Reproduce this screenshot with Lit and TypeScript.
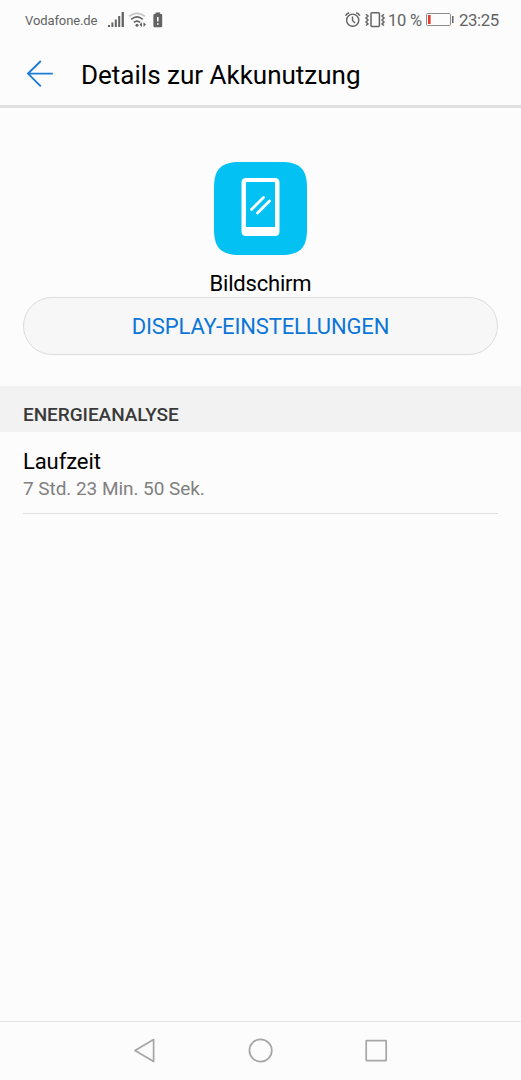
import { LitElement, html, css } from "lit";
import { customElement } from "lit/decorators.js";

@customElement("status-bar")
class StatusBar extends LitElement {
  static styles = css`
    :host { display: flex; justify-content: space-between; height: 40px; padding: 0 21px 0 25px; box-sizing: border-box; color: #636363; }
    .group { display: flex; align-items: center; height: 40px; white-space: nowrap; }
    .carrier { width: 82px; font-size: 13px; letter-spacing: -0.1px; }
    .percent { width: 37px; margin-left: 2px; font-size: 16.5px; letter-spacing: -0.2px; }
    .clock { width: 41px; margin-left: 4px; font-size: 16.8px; letter-spacing: -0.4px; }
    svg { display: block; flex: none; }
  `;
  render() {
    return html`
      <div class="group">
        <span class="carrier">Vodafone.de</span>
        <svg width="20" height="40" viewBox="107 0 20 40" fill="#636363">
          <rect x="108" y="25" width="2" height="2"/><rect x="111.4" y="22.5" width="2" height="4.5"/>
          <rect x="114.8" y="19.5" width="2" height="7.5"/><rect x="118.2" y="16" width="2" height="11"/>
          <rect x="121.6" y="12" width="2.3" height="15"/>
        </svg>
        <svg width="22" height="40" viewBox="127 0 22 40" fill="none" stroke="#636363" stroke-width="1.7">
          <path stroke="#c6c6c6" d="M129 16.4Q137 10.3 145 16.4"/>
          <path d="M131.2 19.3Q137 14.5 142.8 19.3M133.8 22.4Q137 19.8 140.2 22.4"/>
          <circle cx="137" cy="25.2" r="1.5" fill="#636363" stroke="none"/>
          <path fill="#636363" stroke="none" d="M142 22.2V27L139.5 24.6ZM143.5 22.2V27L146 24.6Z"/>
        </svg>
        <svg width="15" height="40" viewBox="149 0 15 40">
          <path fill="#636363" d="M155.5 12.5H160.2V14H161.2Q162.2 14 162.2 15V26Q162.2 27.2 161 27.2H154.6Q153.4 27.2 153.4 26V15Q153.4 14 154.4 14H155.5Z"/>
          <path stroke="#fcfcfc" stroke-width="1.6" d="M157.8 17V21.6M157.8 23.2V24.8"/>
        </svg>
      </div>
      <div class="group">
        <svg width="18" height="40" viewBox="344 0 18 40" fill="none" stroke="#636363" stroke-width="1.4">
          <circle cx="352.7" cy="20.2" r="6.1"/><path d="M352.5 16.5V20.5L355 22.9M345.5 15.8Q346.6 13.3 349.2 12.7M356.2 12.7Q358.8 13.3 359.9 15.8"/>
        </svg>
        <svg width="24" height="40" viewBox="362 0 24 40" fill="none" stroke="#636363" stroke-width="1.5">
          <rect x="371" y="12.8" width="8.4" height="13.6" rx="1"/>
          <path d="M366 14.3L368 16L366 18L368 20L366 22L368 24L366 25.5M384 14.3L382 16L384 18L382 20L384 22L382 24L384 25.5"/>
        </svg>
        <span class="percent">10 %</span>
        <svg width="30" height="40" viewBox="425 0 30 40">
          <rect x="426.5" y="13.5" width="24" height="12" rx="1.3" fill="none" stroke="#8c8c8c" stroke-width="1"/>
          <rect x="428" y="15" width="2.6" height="9" fill="#e33b2e"/><path stroke="#636363" stroke-width="1.5" d="M452.8 16V23"/>
        </svg>
        <span class="clock">23:25</span>
      </div>`;
  }
}

@customElement("nav-bar")
class NavBar extends LitElement {
  static styles = css`
    :host { display: flex; justify-content: space-between; height: 59px; box-sizing: border-box; padding: 14px 130px 0; border-top: 1px solid #e4e4e4; }
    svg { display: block; fill: none; stroke: #a6a6a6; stroke-width: 1.7; stroke-linejoin: round; }
  `;
  render() {
    return html`
      <svg width="29" height="30" viewBox="130 1036 29 30"><path d="M153.6 1039.6V1061.6L135 1050.6Z"/></svg>
      <svg width="30" height="30" viewBox="245.5 1036 30 30"><circle cx="260.1" cy="1050.5" r="11.2"/></svg>
      <svg width="29" height="30" viewBox="362 1036 29 30"><rect x="366.2" y="1040.6" width="20" height="20" rx="0.5"/></svg>`;
  }
}

@customElement("app-root")
class AppRoot extends LitElement {
  static styles = css`
    :host { display: flex; flex-direction: column; height: 1080px; background: #fcfcfc; font-family: Roboto, sans-serif; color: #000; }
    .header { display: flex; align-items: center; height: 68px; box-sizing: border-box; border-bottom: 3px solid #e0e0e0; padding-left: 25px; }
    .back { display: block; margin-right: 26px; }
    h1 { margin: 0; padding-top: 5px; font-size: 26px; font-weight: 400; line-height: 32px; white-space: nowrap; }
    .app { display: flex; flex-direction: column; align-items: center; padding: 54px 23px 31px; }
    .name { height: 42px; box-sizing: border-box; padding-top: 14px; font-size: 22px; letter-spacing: -0.2px; line-height: 30px; }
    .settings { width: 100%; height: 58px; box-sizing: border-box; border: 1px solid #dcdcdc; border-radius: 29px; background: #f7f7f7; color: #0c76d8; font: 400 22px Roboto, sans-serif; letter-spacing: -0.15px; padding: 1px 0 0; }
    h2 { margin: 0; height: 46px; box-sizing: border-box; padding: 15px 23px 0; background: #f2f2f2; color: #3a3a3a; font-size: 19px; letter-spacing: -0.05px; line-height: 27px; font-weight: 500; }
    .row { margin: 0 23px; height: 82px; box-sizing: border-box; border-bottom: 1px solid #dfdfdf; padding-top: 16px; }
    .label { font-size: 22px; line-height: 27px; letter-spacing: -0.1px; }
    .value { font-size: 19px; line-height: 28px; letter-spacing: -0.05px; color: #808080; }
    .space { flex: 1; }
  `;
  render() {
    return html`
      <status-bar></status-bar>
      <header class="header">
        <svg class="back" width="30" height="30" viewBox="25 58.500 30 30" fill="none" stroke="#1c7cd6" stroke-width="1.9"><path d="M52.8 74.1H28M40.8 61.5L28 74.1L40.8 86.900"/></svg>
        <h1>Details zur Akkunutzung</h1>
      </header>
      <section class="app">
        <svg width="93" height="93" viewBox="0 0 93 93">
          <path fill="#03c1f3" d="M26 0H67C86 0 93 7 93 26V67C93 86 86 93 67 93H26C7 93 0 86 0 67V26C0 7 7 0 26 0Z"/>
          <path fill="#fff" fill-rule="evenodd" d="M32 16H61Q65.5 16 65.5 20.5V69.5Q65.5 74 61 74H32Q27.500 74 27.500 69.5V20.5Q27.500 16 32 16ZM33 20Q32 20 32 21V65H61V21Q61 20 60 20Z"/>
          <path stroke="#fff" stroke-width="2.8" stroke-linecap="round" d="M37.500 47.500L49.500 35.500M43.500 51L55.500 39"/>
        </svg>
        <div class="name">Bildschirm</div>
        <button class="settings">DISPLAY-EINSTELLUNGEN</button>
      </section>
      <h2>ENERGIEANALYSE</h2>
      <div class="row">
        <div class="label">Laufzeit</div>
        <div class="value">7 Std. 23 Min. 50 Sek.</div>
      </div>
      <div class="space"></div>
      <nav-bar></nav-bar>`;
  }
}
